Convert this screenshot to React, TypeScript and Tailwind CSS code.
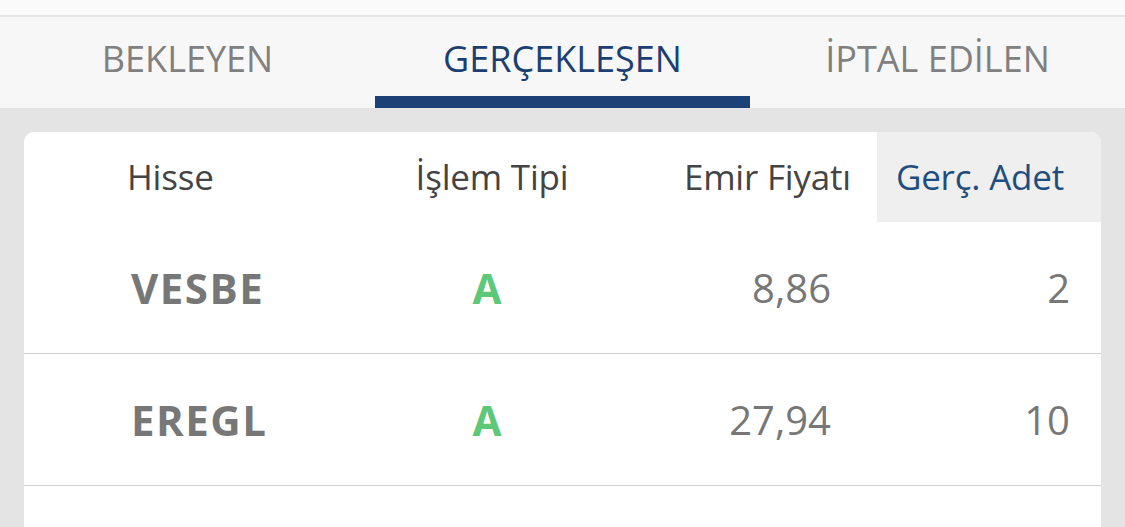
import React from 'react';

const tabs = [
  { label: 'BEKLEYEN', active: false },
  { label: 'GERÇEKLEŞEN', active: true },
  { label: 'İPTAL EDİLEN', active: false },
];

const rows = [
  { symbol: 'VESBE', type: 'A', price: '8,86', qty: '2' },
  { symbol: 'EREGL', type: 'A', price: '27,94', qty: '10' },
];

export default function App() {
  return (
    <div
      className="w-[1125px] h-[527px] overflow-hidden bg-[#e4e4e4]"
      style={{ fontFamily: '"Open Sans", "Noto Sans", sans-serif' }}
    >
      <div className="h-[15px] bg-[#fafafa]" />
      <div className="h-[2px] bg-[#e6e6e6]" />

      {/* tabs */}
      <div className="flex h-[91px] bg-[#f7f7f7]">
        {tabs.map((t) => (
          <div key={t.label} className="flex flex-1 flex-col">
            <div
              className={`flex flex-1 items-center justify-center pt-[4px] text-[36px] ${
                t.active ? 'text-[#1c3f73]' : 'text-[#808080]'
              }`}
            >
              {t.label}
            </div>
            <div className={`h-[12px] ${t.active ? 'bg-[#1b4177]' : ''}`} />
          </div>
        ))}
      </div>

      {/* table card */}
      <div className="ml-[24px] mt-[24px] w-[1077px] overflow-hidden rounded-[10px] bg-white">
        <div className="grid h-[90px] grid-cols-[330px_276px_247px_224px] text-[35px] text-[#444] tracking-[-0.2px]">
          <div className="flex items-center pl-[103px]">Hisse</div>
          <div className="flex items-center justify-center">İşlem Tipi</div>
          <div className="flex items-center justify-end pr-[26px]">Emir Fiyatı</div>
          <div className="flex items-center justify-center bg-[#efefef] pr-[18px] text-[#1e4d80]">
            Gerç. Adet
          </div>
        </div>

        {rows.map((r) => (
          <div
            key={r.symbol}
            className="grid h-[132px] grid-cols-[330px_276px_247px_224px] border-b border-[#cfcfcf] text-[40px] text-[#777]"
          >
            <div className="flex items-center pl-[107px] text-[42px] font-bold tracking-[1.5px]">
              {r.symbol}
            </div>
            <div className="flex items-center justify-center pr-[10px] text-[42px] font-bold text-[#5cc878]">
              {r.type}
            </div>
            <div className="flex items-center justify-end pr-[46px]">{r.price}</div>
            <div className="flex items-center justify-end pr-[31px]">{r.qty}</div>
          </div>
        ))}
        <div className="h-[60px]" />
      </div>
    </div>
  );
}
